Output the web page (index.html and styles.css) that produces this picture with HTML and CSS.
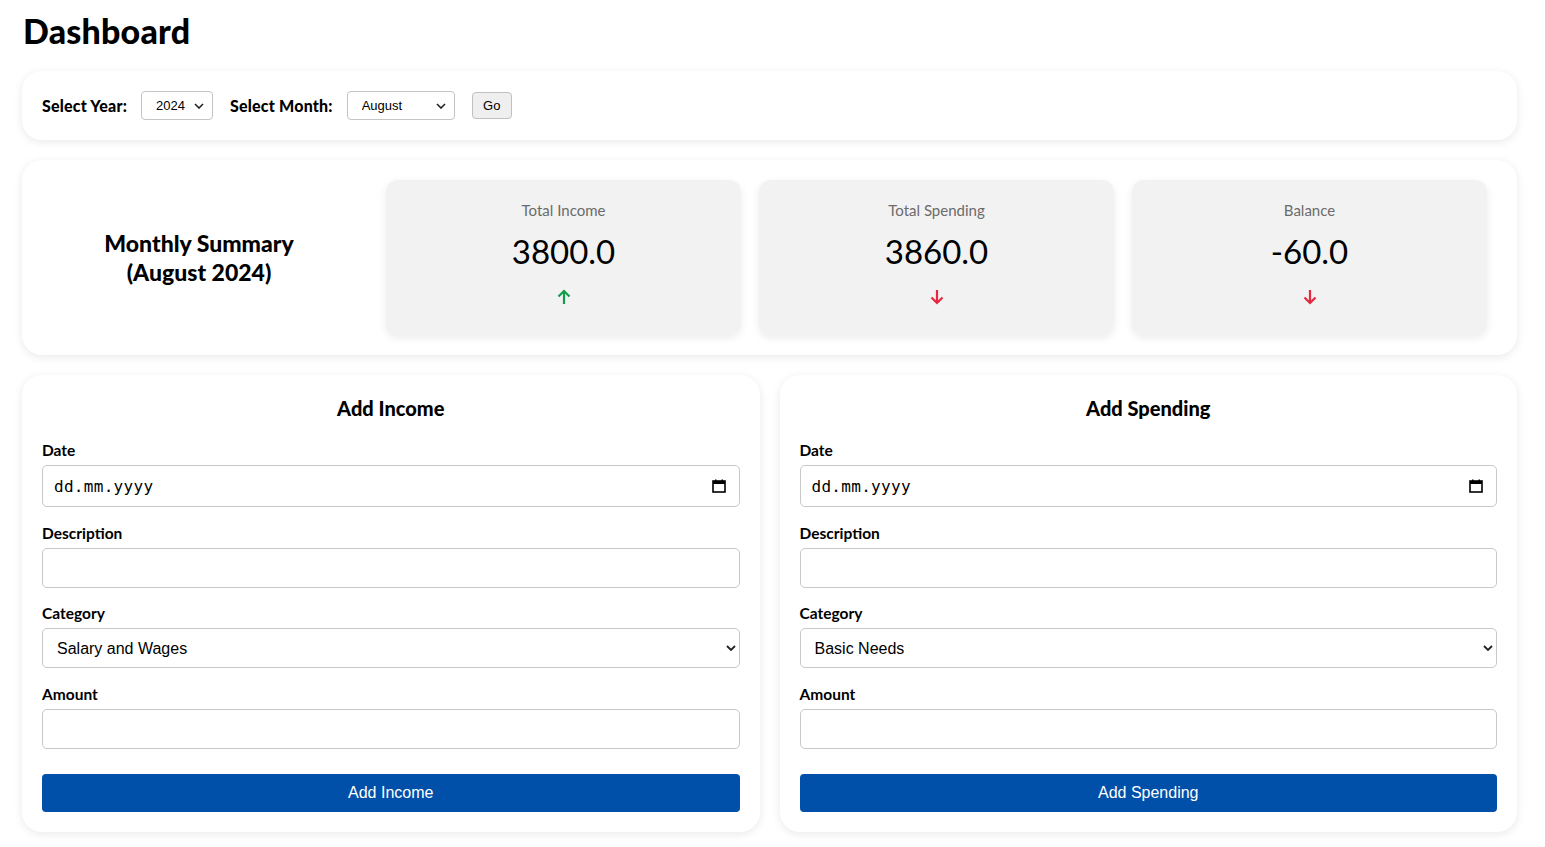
FILE: index.html
```html
<!DOCTYPE html>
<html lang="en">
<head>
<meta charset="utf-8">
<title>Dashboard</title>
<link rel="stylesheet" href="styles.css">
</head>
<body>
<div class="page">
  <h1 class="page-title">Dashboard</h1>

  <div class="card filter-bar">
    <label class="filter-label">Select Year:</label>
    <div class="select-wrap small year">
      <select class="mini-select"><option>2024</option></select>
      <svg class="chev" width="10" height="6" viewBox="0 0 10 6"><path d="M1 1l4 4 4-4" fill="none" stroke="#222" stroke-width="1.6"/></svg>
    </div>
    <label class="filter-label">Select Month:</label>
    <div class="select-wrap small month">
      <select class="mini-select"><option>August</option></select>
      <svg class="chev" width="10" height="6" viewBox="0 0 10 6"><path d="M1 1l4 4 4-4" fill="none" stroke="#222" stroke-width="1.6"/></svg>
    </div>
    <button class="go-btn">Go</button>
  </div>

  <div class="card summary">
    <div class="summary-title">Monthly Summary<br>(August 2024)</div>
    <div class="stat">
      <div class="stat-label">Total Income</div>
      <div class="stat-value">3800.0</div>
      <svg class="stat-arrow" width="14" height="16" viewBox="0 0 14 16"><path d="M7 15V2M1.5 7.5L7 2l5.5 5.5" fill="none" stroke="#0f9d4a" stroke-width="2.2"/></svg>
    </div>
    <div class="stat">
      <div class="stat-label">Total Spending</div>
      <div class="stat-value">3860.0</div>
      <svg class="stat-arrow" width="14" height="16" viewBox="0 0 14 16"><path d="M7 1v13M1.5 8.5L7 14l5.5-5.5" fill="none" stroke="#e5283e" stroke-width="2.2"/></svg>
    </div>
    <div class="stat">
      <div class="stat-label">Balance</div>
      <div class="stat-value">-60.0</div>
      <svg class="stat-arrow" width="14" height="16" viewBox="0 0 14 16"><path d="M7 1v13M1.5 8.5L7 14l5.5-5.5" fill="none" stroke="#e5283e" stroke-width="2.2"/></svg>
    </div>
  </div>

  <div class="forms">
    <form class="card form-card">
      <h2 class="form-title">Add Income</h2>
      <label class="field-label">Date</label>
      <div class="field-wrap">
        <input class="field date" type="text" value="dd.mm.yyyy" readonly>
        <svg class="cal" width="14" height="14" viewBox="0 0 14 14"><rect x="1" y="2" width="12" height="11" fill="none" stroke="#000" stroke-width="1.6"/><rect x="1" y="2" width="12" height="3" fill="#000"/><rect x="3" y="0.5" width="1.5" height="2" fill="#000"/><rect x="9.5" y="0.5" width="1.5" height="2" fill="#000"/></svg>
      </div>
      <label class="field-label">Description</label>
      <input class="field plain" type="text">
      <label class="field-label">Category</label>
      <div class="field-wrap">
        <select class="field select"><option>Salary and Wages</option></select>
        <svg class="chev big" width="10" height="6" viewBox="0 0 10 6"><path d="M1 1l4 4 4-4" fill="none" stroke="#222" stroke-width="1.8"/></svg>
      </div>
      <label class="field-label">Amount</label>
      <input class="field plain" type="text">
      <button type="button" class="submit-btn">Add Income</button>
    </form>

    <form class="card form-card">
      <h2 class="form-title">Add Spending</h2>
      <label class="field-label">Date</label>
      <div class="field-wrap">
        <input class="field date" type="text" value="dd.mm.yyyy" readonly>
        <svg class="cal" width="14" height="14" viewBox="0 0 14 14"><rect x="1" y="2" width="12" height="11" fill="none" stroke="#000" stroke-width="1.6"/><rect x="1" y="2" width="12" height="3" fill="#000"/><rect x="3" y="0.5" width="1.5" height="2" fill="#000"/><rect x="9.5" y="0.5" width="1.5" height="2" fill="#000"/></svg>
      </div>
      <label class="field-label">Description</label>
      <input class="field plain" type="text">
      <label class="field-label">Category</label>
      <div class="field-wrap">
        <select class="field select"><option>Basic Needs</option></select>
        <svg class="chev big" width="10" height="6" viewBox="0 0 10 6"><path d="M1 1l4 4 4-4" fill="none" stroke="#222" stroke-width="1.8"/></svg>
      </div>
      <label class="field-label">Amount</label>
      <input class="field plain" type="text">
      <button type="button" class="submit-btn">Add Spending</button>
    </form>
  </div>
</div>
</body>
</html>
```

FILE: styles.css
```css
* { box-sizing: border-box; }

html, body {
  margin: 0;
  padding: 0;
  background: #fff;
}

body {
  font-family: "Lato", "Noto Sans", sans-serif;
  color: #000;
}

.page {
  padding: 11px 28px 15px 22px;
  display: flex;
  flex-direction: column;
  gap: 20px;
}

.page-title {
  margin: 0 0 0 1px;
  font-size: 34px;
  font-weight: 900;
  line-height: 40px;
  letter-spacing: 0.2px;
}

.card {
  background: #fff;
  border-radius: 20px;
  box-shadow: 0 2px 10px rgba(0, 0, 0, 0.09);
}

/* Filter bar */
.filter-bar {
  height: 69px;
  padding: 0 20px;
  display: flex;
  align-items: center;
}

.filter-label {
  font-size: 16px;
  font-weight: 900;
  letter-spacing: 0.2px;
  margin-right: 14px;
}

.select-wrap {
  position: relative;
}

.select-wrap.year { width: 72px; margin-right: 17px; }
.select-wrap.month { width: 108px; margin-right: 17px; }

.mini-select {
  appearance: none;
  -webkit-appearance: none;
  width: 100%;
  height: 29px;
  border: 1px solid #c4c4c4;
  border-radius: 4px;
  background: #fff;
  font-family: "Liberation Sans", Arial, sans-serif;
  font-size: 13px;
  color: #000;
  padding: 0 0 0 14px;
}

.chev {
  position: absolute;
  right: 9px;
  top: 50%;
  margin-top: -3px;
  pointer-events: none;
}

.go-btn {
  height: 27px;
  width: 40px;
  border: 1px solid #c0c0c0;
  border-radius: 4px;
  background: #efefef;
  font-family: "Liberation Sans", Arial, sans-serif;
  font-size: 13px;
  color: #000;
  padding: 0;
}

/* Summary */
.summary {
  padding: 20px 30px 20px 20px;
  display: flex;
  gap: 18px;
  align-items: stretch;
}

.summary-title {
  width: 326px;
  display: flex;
  align-items: center;
  justify-content: center;
  text-align: center;
  font-size: 23px;
  font-weight: 900;
  line-height: 29px;
  padding-right: 12px;
}

.stat {
  flex: 1;
  height: 155px;
  background: #f2f2f2;
  border-radius: 12px;
  box-shadow: 0 3px 8px rgba(0, 0, 0, 0.08);
  display: flex;
  flex-direction: column;
  align-items: center;
  padding-top: 20px;
}

.stat-label {
  font-size: 15px;
  color: #6b6b6b;
  line-height: 20px;
}

.stat-value {
  font-size: 33px;
  font-weight: 400;
  line-height: 40px;
  margin-top: 11px;
}

.stat-arrow {
  margin-top: 18px;
}

/* Forms */
.forms {
  display: grid;
  grid-template-columns: 1fr 1fr;
  gap: 20px;
}

.form-card {
  margin: 0;
  padding: 20px;
  display: flex;
  flex-direction: column;
}

.form-title {
  margin: 0 0 19px;
  text-align: center;
  font-size: 20px;
  font-weight: 900;
  line-height: 26px;
}

.field-label {
  font-size: 15.5px;
  font-weight: 700;
  line-height: 20px;
  margin-bottom: 5px;
}

.field-wrap {
  position: relative;
}

.field {
  display: block;
  width: 100%;
  border: 1px solid #c8c8c8;
  border-radius: 5px;
  background: #fff;
  color: #000;
  margin-bottom: 16px;
}

.field.date {
  height: 42px;
  padding: 0 11px;
  font-family: "DejaVu Sans Mono", "Liberation Mono", monospace;
  font-size: 16px;
  letter-spacing: 0.3px;
  outline: none;
}

.cal {
  position: absolute;
  right: 14px;
  top: 14px;
  pointer-events: none;
}

.field.plain {
  height: 40px;
  padding: 0 10px;
  font-size: 16px;
  margin-bottom: 15px;
}

.field.select {
  appearance: none;
  -webkit-appearance: none;
  height: 40px;
  padding: 0 14px;
  font-family: "Liberation Sans", Arial, sans-serif;
  font-size: 16px;
  margin-bottom: 16px;
}

.field-wrap .chev.big { top: 17px; margin-top: 0; right: 4px; }

.submit-btn {
  margin-top: 10px;
  height: 38px;
  width: 100%;
  border: none;
  border-radius: 4px;
  background: #004fa8;
  color: #fff;
  font-family: "Liberation Sans", Arial, sans-serif;
  font-size: 16px;
  padding: 0;
}
```
